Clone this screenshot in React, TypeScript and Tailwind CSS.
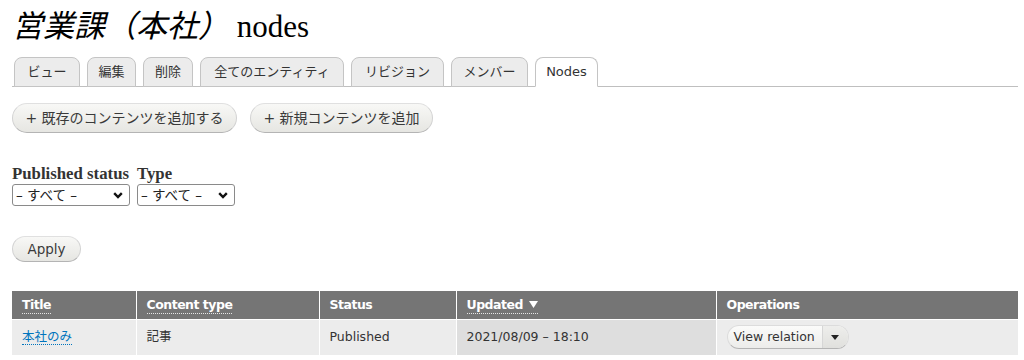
import React from "react";

const tabs = [
  { label: "ビュー", w: "w-[66px]" },
  { label: "編集", w: "w-[49px]" },
  { label: "削除", w: "w-[50px]" },
  { label: "全てのエンティティ", w: "w-[144px]" },
  { label: "リビジョン", w: "w-[93px]" },
  { label: "メンバー", w: "w-[77px]" },
  { label: "Nodes", w: "w-[63px]", active: true },
];

const sans = "font-['DejaVu_Sans','Noto_Sans_CJK_JP',sans-serif]";

function PillButton({ children, className = "" }: { children: React.ReactNode; className?: string }) {
  return (
    <button
      className={`rounded-[20px] border border-[#e0e0e0] border-b-[#b4b4b4] border-x-[#d2d2d2] bg-gradient-to-b from-[#f8f8f6] to-[#e6e6e2] text-[#3a3a3a] ${sans} ${className}`}
    >
      {children}
    </button>
  );
}

function FakeSelect({ width }: { width: string }) {
  return (
    <div
      className={`flex h-[22px] items-center justify-between rounded-[3px] border border-[#8a8a8a] bg-white pl-[3px] pr-[6px] text-[13.5px] text-[#222] ${sans} ${width}`}
    >
      <span>– すべて –</span>
      <svg width="10" height="7" viewBox="0 0 10 7">
        <path d="M1.2 1.2 L5 5 L8.8 1.2" fill="none" stroke="#111" strokeWidth="2.4" />
      </svg>
    </div>
  );
}

function SortLink({ children }: { children: React.ReactNode }) {
  return <span className="border-b border-dotted border-[#e6e6e6] pb-[1px]">{children}</span>;
}

export default function App() {
  return (
    <div className="min-h-[360px] bg-white pl-3 pr-[6px] pt-[8px]">
      <h1 className="font-['Liberation_Serif','Noto_Sans_CJK_JP',serif] text-[31px] leading-[38px] text-black">
        <em>営業課（本社）</em> nodes
      </h1>

      <ul className={`mt-[11px] flex gap-[7px] border-b border-[#bfbfbf] pl-[2px] ${sans}`}>
        {tabs.map((t) => (
          <li
            key={t.label}
            className={`-mb-px flex h-[30px] items-center justify-center rounded-t-[8px] border border-[#c4c4c4] text-[13px] text-[#333] ${t.w} ${
              t.active ? "border-b-white bg-white text-[#111]" : "bg-[#ececec]"
            }`}
          >
            {t.label}
          </li>
        ))}
      </ul>

      <div className="mt-[16px] flex gap-[13px]">
        <PillButton className="h-[30px] w-[225px] text-[14px]">+ 既存のコンテンツを追加する</PillButton>
        <PillButton className="h-[30px] w-[183px] text-[14px]">+ 新規コンテンツを追加</PillButton>
      </div>

      <div className="mt-[32px] flex gap-[7px]">
        <div className="w-[118px]">
          <div className="whitespace-nowrap font-['Liberation_Serif',serif] text-[16.8px] font-bold leading-[18px] text-[#333]">
            Published status
          </div>
          <div className="mt-[1px]">
            <FakeSelect width="w-[118px]" />
          </div>
        </div>
        <div>
          <div className="font-['Liberation_Serif',serif] text-[16.8px] font-bold leading-[18px] text-[#333]">
            Type
          </div>
          <div className="mt-[1px]">
            <FakeSelect width="w-[98px]" />
          </div>
        </div>
      </div>

      <div className="mt-[30px]">
        <PillButton className="h-[26px] w-[69px] text-[13.5px]">Apply</PillButton>
      </div>

      <table className={`mt-[29px] w-[1006px] table-fixed border-collapse ${sans}`}>
        <colgroup>
          <col className="w-[124px]" />
          <col className="w-[183px]" />
          <col className="w-[137px]" />
          <col className="w-[260px]" />
          <col />
        </colgroup>
        <thead>
          <tr className="h-[28px] bg-[#757575] text-left text-[12.5px] font-bold tracking-[-0.5px] text-white">
            <th className="px-[10px] font-bold">
              <SortLink>Title</SortLink>
            </th>
            <th className="border-l border-white px-[10px] font-bold">
              <SortLink>Content type</SortLink>
            </th>
            <th className="border-l border-white px-[10px] font-bold">Status</th>
            <th className="border-l border-white px-[10px] font-bold">
              <SortLink>
                Updated
                <svg className="ml-[6px] inline-block align-[1px]" width="9" height="7" viewBox="0 0 9 7">
                  <path d="M0 0 L9 0 L4.5 7 Z" fill="#fff" />
                </svg>
              </SortLink>
            </th>
            <th className="border-l border-white px-[10px] font-bold">Operations</th>
          </tr>
        </thead>
        <tbody>
          <tr className="h-[36px] border-t border-white bg-[#ececec] text-[12.5px] text-[#333]">
            <td className="px-[10px]">
              <a className="border-b border-dotted border-[#0074bd] text-[#0074bd]">本社のみ</a>
            </td>
            <td className="border-l border-white px-[10px]">記事</td>
            <td className="border-l border-white px-[10px]">Published</td>
            <td className="border-l border-white bg-[#dedede] px-[10px]">2021/08/09 – 18:10</td>
            <td className="border-l border-white px-[10px]">
              <div className="flex h-[24px] w-[122px] items-center overflow-hidden rounded-[12px] border border-[#dcdcdc] border-b-[#b4b4b4] bg-gradient-to-b from-[#fbfbfa] to-[#ececea]">
                <span className="pl-[6px] pr-[7px] text-[12.5px] text-[#333]">View relation</span>
                <span className="flex h-full flex-1 items-center justify-center border-l border-[#d6d6d6] bg-gradient-to-b from-[#eeeeec] to-[#e0e0dd]">
                  <svg width="8" height="5" viewBox="0 0 8 5">
                    <path d="M0 0 L8 0 L4 5 Z" fill="#222" />
                  </svg>
                </span>
              </div>
            </td>
          </tr>
        </tbody>
      </table>
    </div>
  );
}
